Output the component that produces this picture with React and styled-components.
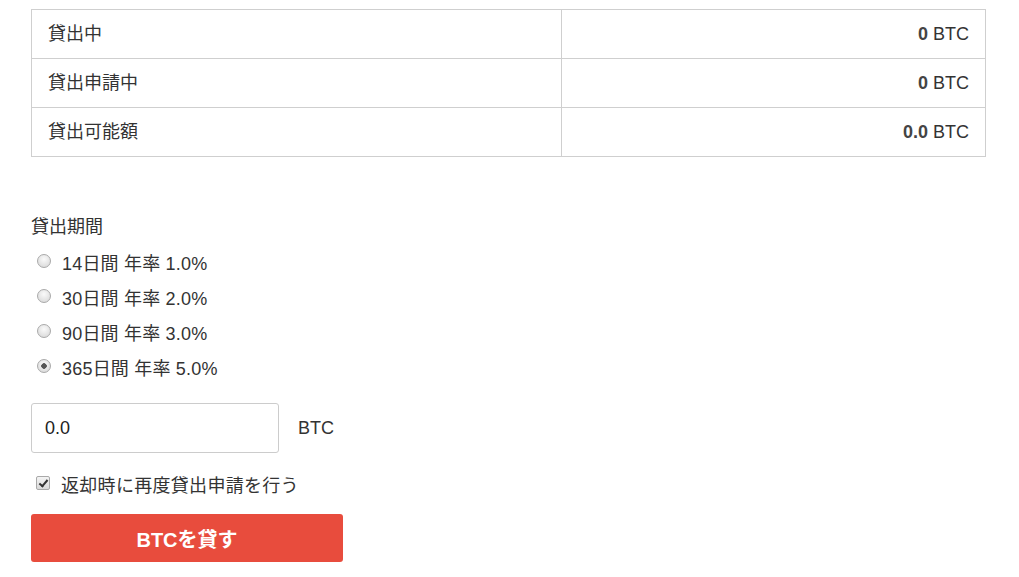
import React, { useState } from 'react'
import styled, { createGlobalStyle } from 'styled-components'

// Lending form: balances table, lending period radios, amount input and submit

const GlobalStyle = createGlobalStyle`
  html, body {
    margin: 0;
    padding: 0;
    background: #fff;
  }
  body {
    font-family: "Liberation Sans", Arial, "Noto Sans CJK JP", sans-serif;
    font-size: 18px;
    color: #333;
  }
`

const balances = [
  { label: '貸出中', value: '0' },
  { label: '貸出申請中', value: '0' },
  { label: '貸出可能額', value: '0.0' },
]

const periods = [
  { id: 14, text: '14日間 年率 1.0%' },
  { id: 30, text: '30日間 年率 2.0%' },
  { id: 90, text: '90日間 年率 3.0%' },
  { id: 365, text: '365日間 年率 5.0%' },
]

export default function App() {
  const [period, setPeriod] = useState(365)
  const [amount, setAmount] = useState('0.0')
  const [again, setAgain] = useState(true)

  return (
    <>
      <GlobalStyle />
      <Page>
        <Table>
          <colgroup>
            <col style={{ width: 530 }} />
            <col style={{ width: 424 }} />
          </colgroup>
          <tbody>
            {balances.map((b) => (
              <tr key={b.label}>
                <Cell>{b.label}</Cell>
                <Cell $right>
                  <strong>{b.value}</strong> BTC
                </Cell>
              </tr>
            ))}
          </tbody>
        </Table>

        <SectionLabel>貸出期間</SectionLabel>
        <RadioList>
          {periods.map((p) => (
            <RadioRow key={p.id}>
              <Radio
                type="radio"
                name="period"
                checked={period === p.id}
                onChange={() => setPeriod(p.id)}
              />
              {p.text}
            </RadioRow>
          ))}
        </RadioList>

        <AmountRow>
          <AmountInput value={amount} onChange={(e) => setAmount(e.target.value)} />
          <Unit>BTC</Unit>
        </AmountRow>

        <CheckRow>
          <Check type="checkbox" checked={again} onChange={() => setAgain(!again)} />
          返却時に再度貸出申請を行う
        </CheckRow>

        <SubmitButton>BTCを貸す</SubmitButton>
      </Page>
    </>
  )
}

const Page = styled.div`
  padding: 9px 33px 0 31px;
`

const Table = styled.table`
  width: 954px;
  border-collapse: collapse;
  table-layout: fixed;
`

const Cell = styled.td`
  height: 48px;
  padding: 0 16px;
  border: 1px solid #cfcfcf;
  text-align: ${(p) => (p.$right ? 'right' : 'left')};
  line-height: 24px;

  strong {
    font-weight: bold;
    color: #444;
  }
`

const SectionLabel = styled.div`
  margin-top: 58px;
  line-height: 24px;
`

const RadioList = styled.div`
  margin-top: 5px;
  display: flex;
  flex-direction: column;
`

const RadioRow = styled.label`
  height: 35px;
  display: flex;
  align-items: center;
  gap: 11px;
  padding-left: 6px;
  letter-spacing: 0.2px;
`

const Radio = styled.input`
  appearance: none;
  margin: 0;
  width: 14px;
  height: 14px;
  border-radius: 50%;
  border: 1px solid #a9a9a9;
  background: radial-gradient(circle at 50% 35%, #fafafa 0%, #dcdcdc 80%);
  box-sizing: border-box;
  position: relative;
  top: -1px;

  &:checked {
    background: radial-gradient(circle, #555 0 2.5px, transparent 3px),
      radial-gradient(circle at 50% 35%, #fafafa 0%, #dcdcdc 80%);
  }
`

const AmountRow = styled.div`
  margin-top: 19px;
  display: flex;
  align-items: center;
  gap: 19px;
`

const AmountInput = styled.input`
  width: 248px;
  height: 50px;
  box-sizing: border-box;
  border: 1px solid #cccccc;
  border-radius: 3px;
  padding: 0 13px;
  font-family: inherit;
  font-size: 18px;
  color: #222;
  outline: none;
`

const Unit = styled.span`
  color: #333;
`

const CheckRow = styled.label`
  margin-top: 19px;
  height: 24px;
  display: flex;
  align-items: center;
  gap: 11px;
  padding-left: 5px;
  letter-spacing: 0.3px;
`

const Check = styled.input`
  appearance: none;
  margin: 0;
  width: 14px;
  height: 14px;
  border: 1px solid #a9a9a9;
  border-radius: 2px;
  box-sizing: border-box;
  background: linear-gradient(#f4f4f4, #d9d9d9);
  position: relative;
  top: -1px;

  &:checked::after {
    content: '';
    position: absolute;
    left: 4px;
    top: 1px;
    width: 3px;
    height: 7px;
    border: solid #333;
    border-width: 0 2px 2px 0;
    transform: rotate(40deg);
  }
`

const SubmitButton = styled.button`
  margin-top: 18px;
  width: 312px;
  height: 48px;
  border: none;
  border-radius: 3px;
  background: #e84c3d;
  color: #fff;
  font-family: inherit;
  font-size: 20px;
  font-weight: bold;
  cursor: pointer;
`
